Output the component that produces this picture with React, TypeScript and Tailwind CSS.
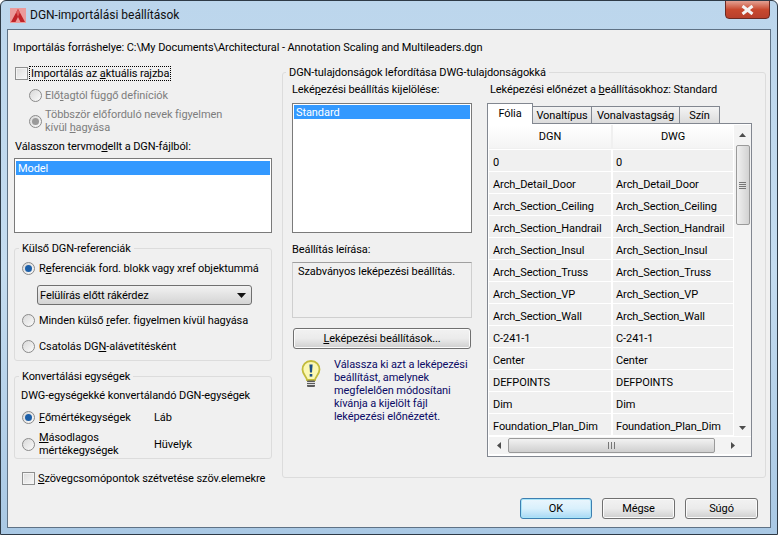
import type { ReactNode } from 'react';

const rows = [
    '0',
    'Arch_Detail_Door',
    'Arch_Section_Ceiling',
    'Arch_Section_Handrail',
    'Arch_Section_Insul',
    'Arch_Section_Truss',
    'Arch_Section_VP',
    'Arch_Section_Wall',
    'C-241-1',
    'Center',
    'DEFPOINTS',
    'Dim',
    'Foundation_Plan_Dim',
];

function Radio({ checked, disabled }: { checked?: boolean; disabled?: boolean }) {
    const dot = disabled ? 'bg-[#9a9a9a]' : 'bg-[#1c5fa8]';
    return (
        <span className="w-[13px] h-[13px] shrink-0 rounded-full border border-[#8a8a8a] bg-gradient-to-br from-[#d8d8d8] to-[#fbfbfb] flex items-center justify-center">
            {checked && <span className={`w-[7px] h-[7px] rounded-full ${dot}`} />}
        </span>
    );
}

function Check() {
    return (
        <span className="w-[13px] h-[13px] shrink-0 border border-[#8e8f8f] bg-gradient-to-br from-[#dcdcdc] to-[#f8f8f8] shadow-[inset_0_0_0_1px_#f4f4f4]" />
    );
}

function WinButton({ children, className = '', primary }: { children: ReactNode; className?: string; primary?: boolean }) {
    const look = primary
        ? 'border-[#3c7fb1] shadow-[inset_0_0_0_1px_#a8e4f8] bg-gradient-to-b from-[#eaf6fd] via-[#d9f0fc] to-[#a7d9f5]'
        : 'border-[#707070] shadow-[inset_0_0_0_1px_#fbfbfb] bg-gradient-to-b from-[#f2f2f2] via-[#ebebeb] to-[#cfcfcf]';
    return (
        <button className={`h-[21px] rounded-[3px] border text-black text-center ${look} ${className}`}>
            {children}
        </button>
    );
}

function Arrow({ dir }: { dir: 'up' | 'down' | 'left' | 'right' }) {
    const d = {
        up: 'M0 4 L3.5 0 L7 4 Z',
        down: 'M0 0 L7 0 L3.5 4 Z',
        left: 'M4 0 L4 7 L0 3.5 Z',
        right: 'M0 0 L0 7 L4 3.5 Z',
    }[dir];
    const size = dir === 'up' || dir === 'down' ? 'w-[7px] h-[4px]' : 'w-[4px] h-[7px]';
    return (
        <svg className={size} viewBox={dir === 'up' || dir === 'down' ? '0 0 7 4' : '0 0 4 7'}>
            <path d={d} fill="#4d4d4d" />
        </svg>
    );
}

function MappingTable() {
    return (
        <div className="h-[334px] border border-[#828790] bg-white pt-px pl-px flex flex-col">
            <div className="flex h-[311px]">
                <div className="w-[246px] overflow-hidden">
                    <div className="flex h-[24px] bg-gradient-to-b from-white to-[#f4f4f4] border-b border-[#f0f0f0]">
                        <div className="w-[124px] border-r-2 border-[#f0f0f0] flex items-center justify-center">DGN</div>
                        <div className="flex-1 flex items-center justify-center">DWG</div>
                    </div>
                    <div className="mt-px">
                        {rows.map((r) => (
                            <div key={r} className="flex h-[22px] bg-[#f0f0f0] border-b border-white items-center">
                                <div className="w-[124px] pl-[4px] pt-[3px] border-r-2 border-white h-full flex items-center">{r}</div>
                                <div className="flex-1 pl-[3px] pt-[3px]">{r}</div>
                            </div>
                        ))}
                    </div>
                </div>
                <div className="w-[17px] ml-px flex flex-col items-center bg-[#f3f3f3]">
                    <div className="h-[20px] flex items-center justify-center"><Arrow dir="up" /></div>
                    <div className="w-[14px] h-[80px] rounded-[2px] border border-[#9a9a9a] bg-gradient-to-r from-[#f0f0f0] to-[#d2d2d2] flex flex-col items-center justify-center gap-px">
                        <span className="w-[7px] h-px bg-[#777]" />
                        <span className="w-[7px] h-px bg-[#777]" />
                        <span className="w-[7px] h-px bg-[#777]" />
                        <span className="w-[7px] h-px bg-[#777]" />
                    </div>
                    <div className="flex-1" />
                    <div className="h-[16px] flex items-center justify-center"><Arrow dir="down" /></div>
                </div>
            </div>
            <div className="mt-px h-[17px] w-[262px] flex items-center bg-[#f3f3f3]">
                <div className="w-[19px] flex justify-center"><Arrow dir="left" /></div>
                <div className="w-[207px] h-[15px] rounded-[2px] border border-[#9a9a9a] bg-gradient-to-b from-[#f2f2f2] to-[#cfcfcf] flex items-center justify-center gap-px">
                    <span className="h-[7px] w-px bg-[#777]" />
                    <span className="h-[7px] w-px bg-[#777] ml-px" />
                    <span className="h-[7px] w-px bg-[#777] ml-px" />
                </div>
                <div className="flex-1 flex justify-center"><Arrow dir="right" /></div>
            </div>
        </div>
    );
}

export default function App() {
    return (
        <div className="w-[778px] h-[535px] overflow-hidden rounded-t-[6px] border border-[#2e3a46] bg-gradient-to-b from-[#bcd6ec] via-[#c4dcf0] to-[#a9c8e4] flex flex-col text-[11px] tracking-[-0.08px] leading-[13px] text-black font-['Roboto',sans-serif]">
            <div className="h-[28px] shrink-0 flex items-start">
                <svg className="w-[16px] h-[15px] ml-[9px] mt-[7px]" viewBox="0 0 16 15">
                    <rect width="16" height="15" fill="#eb9a9a" />
                    <path d="M8 1 L15 14 L10.5 14 L8 9 L5.5 14 L1 14 Z" fill="#bf2328" />
                    <path d="M8 1 L9.8 4.5 L8 9 L6.2 4.5 Z" fill="#dd5a5a" />
                </svg>
                <span className="ml-[4px] mt-[7px] text-[12px] tracking-normal leading-[15px] text-[#101010]">DGN-importálási beállítások</span>
                <div className="ml-auto mr-[7px] -mt-px w-[45px] h-[19px] rounded-b-[4px] border border-[#6b2a22] bg-gradient-to-b from-[#e2a092] via-[#c8492f] to-[#b8402c] flex items-center justify-center">
                    <svg className="w-[13px] h-[10px]" viewBox="0 0 13 10">
                        <path d="M1.5 1 L11.5 9 M11.5 1 L1.5 9" stroke="#f4f4f4" strokeWidth="3" />
                    </svg>
                </div>
            </div>

            <div className="mx-[6px] h-[499px] shrink-0 border border-[#5f7285] bg-[#f0f0f0] pt-[11px]">
                <div className="ml-[5px] whitespace-nowrap">Importálás forráshelye: C:\My Documents\Architectural - Annotation Scaling and Multileaders.dgn</div>

                <div className="flex mt-[12px] ml-[6px]">
                    <div className="w-[258px] shrink-0">
                        <div className="flex items-center h-[15px] ml-px">
                            <Check />
                            <span className="ml-px px-px border border-dotted border-black leading-[13px] whitespace-nowrap">Importálás az <u>a</u>ktuális rajzba</span>
                        </div>
                        <div className="flex items-center mt-[8px] ml-[15px] gap-[3px] text-[#7d7d7d]">
                            <Radio disabled />
                            <span>Elő<u>t</u>agtól függő definíciók</span>
                        </div>
                        <div className="flex items-center mt-[6px] ml-[15px] gap-[3px] text-[#7d7d7d]">
                            <Radio disabled checked />
                            <span>Többször előforduló nevek figyelmen<br />kívül <u>h</u>agyása</span>
                        </div>
                        <div className="mt-[6px] ml-px whitespace-nowrap">Válasszon tervmo<u>d</u>ellt a DGN-fájlból:</div>
                        <div className="mt-[5px] h-[75px] border border-[#7a7a7a] bg-white pt-[2px] px-px">
                            <div className="h-[14px] bg-[#3399ff] text-white pl-[2px] leading-[15px]">Model</div>
                        </div>

                        <fieldset className="mt-[9px] h-[119px] rounded-[3px] border border-[#dcdcdc] pl-[7px]">
                            <legend className="-ml-[3px] px-[3px]">Külső DGN-referenciák</legend>
                            <div className="flex items-center mt-[7px] gap-[4px] whitespace-nowrap">
                                <Radio checked />
                                <span>R<u>e</u>ferenciák ford. blokk vagy xref objektummá</span>
                            </div>
                            <div className="mt-[10px] ml-[15px] w-[215px] h-[20px] rounded-[3px] border border-[#707070] bg-gradient-to-b from-[#f2f2f2] to-[#d4d4d4] flex items-center pl-[2px] pr-[5px]">
                                <span>Felülírás előtt rákérdez</span>
                                <svg className="ml-auto w-[9px] h-[5px]" viewBox="0 0 9 5"><path d="M0 0 L9 0 L4.5 5 Z" fill="#111" /></svg>
                            </div>
                            <div className="flex items-center mt-[9px] gap-[4px] whitespace-nowrap">
                                <Radio />
                                <span>Minden külső <u>r</u>efer. figyelmen kívül hagyása</span>
                            </div>
                            <div className="flex items-center mt-[13px] gap-[4px] whitespace-nowrap">
                                <Radio />
                                <span>Csatolás DG<u>N</u>-alávetítésként</span>
                            </div>
                        </fieldset>

                        <fieldset className="mt-[9px] h-[89px] rounded-[3px] border border-[#dcdcdc] pl-[6px]">
                            <legend className="-ml-[2px] px-[3px]">Konvertálási egységek</legend>
                            <div className="mt-[6px] whitespace-nowrap">DWG-egységekké konvertálandó DGN-egységek</div>
                            <div className="flex items-center mt-[9px] ml-px">
                                <Radio checked />
                                <span className="ml-[4px] w-[115px]"><u>F</u>őmértékegységek</span>
                                <span>Láb</span>
                            </div>
                            <div className="flex items-center mt-[7px] ml-px">
                                <Radio />
                                <span className="ml-[4px] w-[115px]"><u>M</u>ásodlagos<br />mértékegységek</span>
                                <span>Hüvelyk</span>
                            </div>
                        </fieldset>

                        <div className="flex items-center mt-[13px] ml-[8px] gap-[3px] whitespace-nowrap">
                            <Check />
                            <span><u>S</u>zövegcsomópontok szétvetése szöv.elemekre</span>
                        </div>
                    </div>

                    <fieldset className="ml-[10px] w-[484px] h-[412px] rounded-[3px] border border-[#dcdcdc] pl-[9px]">
                        <legend className="-ml-[6px] px-[3px] whitespace-nowrap">DGN-tulajdonságok lefordítása DWG-tulajdonságokká</legend>
                        <div className="flex mt-[4px]">
                            <div className="w-[180px] shrink-0">
                                <div className="whitespace-nowrap">Leké<u>p</u>ezési beállítás kijelölése:</div>
                                <div className="mt-[7px] h-[130px] border border-[#7a7a7a] bg-white p-px">
                                    <div className="h-[14px] bg-[#3399ff] text-white pl-[2px] leading-[15px]">Standard</div>
                                </div>
                                <div className="mt-[10px]">Beállítás leírása:</div>
                                <div className="mt-[6px] h-[56px] border border-[#cfcfcf] border-t-[#a0a0a0] pl-[5px] pt-[2px] whitespace-nowrap">Szabványos leképezési beállítás.</div>
                                <WinButton className="mt-[10px] ml-px w-[178px]"><u>L</u>eképezési beállítások...</WinButton>
                                <div className="flex mt-[9px] text-[#0b0b66]">
                                    <svg className="w-[20px] h-[28px] ml-[9px] mt-[2px] shrink-0" viewBox="0 0 20 28">
                                        <path d="M10 1 C4.5 1 1.5 5 1.5 9.5 C1.5 14 5.5 16.5 6 20 L14 20 C14.5 16.5 18.5 14 18.5 9.5 C18.5 5 15.5 1 10 1 Z" fill="#fbf8b4" stroke="#c2bb3c" strokeWidth="1.8" />
                                        <path d="M8.4 4.5 H11.6 L11 12.5 H9 Z" fill="#1d4f86" />
                                        <rect x="8.7" y="14" width="2.6" height="2.6" fill="#1d4f86" />
                                        <rect x="6" y="20.5" width="8" height="6.5" rx="1" fill="#5c5c5c" />
                                        <path d="M6 22.5 H14 M6 24.5 H14" stroke="#dedede" />
                                    </svg>
                                    <div className="ml-[13px] whitespace-nowrap">Válassza ki azt a leképezési<br />beállítást, amelynek<br />megfelelően módosítani<br />kívánja a kijelölt fájl<br />leképezési előnézetét.</div>
                                </div>
                            </div>

                            <div className="ml-[15px] w-[265px] shrink-0">
                                <div className="ml-[3px] whitespace-nowrap">Leképezési előnézet a <u>b</u>eállításokhoz: Standard</div>
                                <div className="mt-[7px] h-[21px] flex items-end -mb-px relative">
                                    <div className="w-[46px] h-[21px] border border-b-0 border-[#828790] bg-white flex items-center justify-center pb-[2px]">Fólia</div>
                                    <div className="w-[59px] h-[18px] border border-l-0 border-[#828790] bg-gradient-to-b from-[#f4f4f4] to-[#dcdcdc] flex items-center justify-center">Vonaltípus</div>
                                    <div className="w-[88px] h-[18px] border border-l-0 border-[#828790] bg-gradient-to-b from-[#f4f4f4] to-[#dcdcdc] flex items-center justify-center">Vonalvastagság</div>
                                    <div className="w-[40px] h-[18px] border border-l-0 border-[#828790] bg-gradient-to-b from-[#f4f4f4] to-[#dcdcdc] flex items-center justify-center">Szín</div>
                                </div>
                                <MappingTable />
                            </div>
                        </div>
                    </fieldset>
                </div>

                <div className="flex justify-end gap-[10px] mt-[13px] mr-[12px]">
                    <WinButton primary className="w-[72px]">OK</WinButton>
                    <WinButton className="w-[73px]">Mégse</WinButton>
                    <WinButton className="w-[73px]">Súgó</WinButton>
                </div>
            </div>
        </div>
    );
}
